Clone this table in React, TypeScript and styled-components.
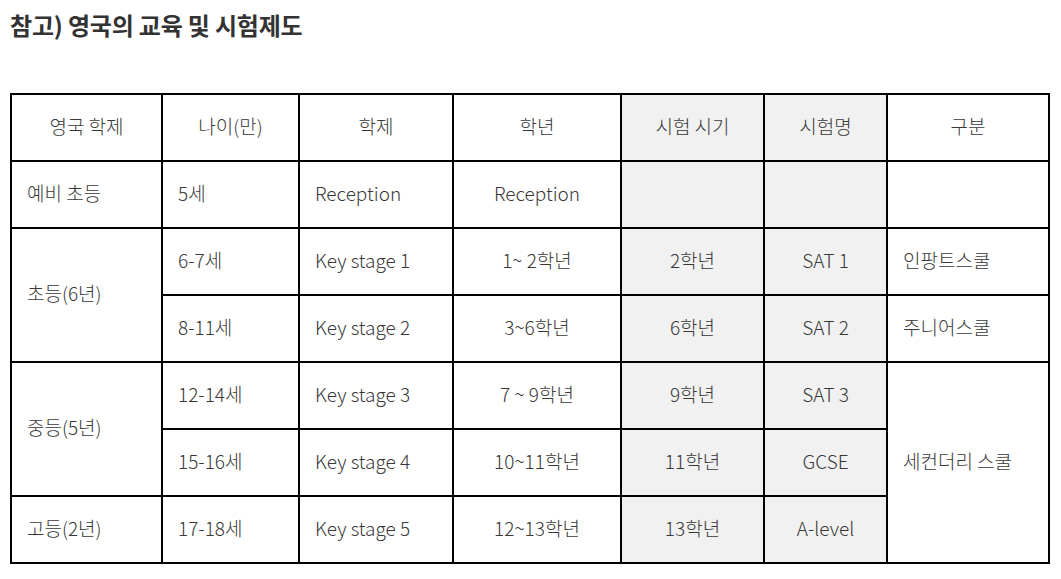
import { FC } from 'react';
import styled, { createGlobalStyle } from 'styled-components';

const GlobalStyle = createGlobalStyle`
    body {
        margin: 0;
        background: #fff;
        font-family: 'Noto Sans CJK KR', 'Noto Sans', sans-serif;
        color: #333;
    }
`;

const Page = styled.div`
    padding: 8px 10px;
`;

const Title = styled.h3`
    margin: 0 0 51px;
    font-size: 24px;
    font-weight: 700;
    line-height: 34px;
    color: #333;
    letter-spacing: -0.2px;
`;

const Table = styled.table`
    border-collapse: collapse;
    table-layout: fixed;
    width: 1038px;
    font-size: 19px;
    font-weight: 300;
`;

const Row = styled.tr`
    height: 67px;
`;

type CellProps = { $center?: boolean; $shade?: boolean };

const Cell = styled.td<CellProps>`
    border: 2px solid #000;
    padding: 0 15px 5px;
    text-align: ${(p) => (p.$center ? 'center' : 'left')};
    background: ${(p) => (p.$shade ? '#f1f1f1' : '#fff')};
    color: #383838;
    vertical-align: middle;
    white-space: nowrap;
`;

const widths = [151, 137, 154, 168, 143, 123, 162];
const headers = ['영국 학제', '나이(만)', '학제', '학년', '시험 시기', '시험명', '구분'];

type Line = {
    stage?: { label: string; span: number };
    age: string;
    term: string;
    grade: string;
    when: string;
    exam: string;
    school?: { label: string; span: number };
};

const lines: Line[] = [
    { stage: { label: '예비 초등', span: 1 }, age: '5세', term: 'Reception', grade: 'Reception', when: '', exam: '', school: { label: '', span: 1 } },
    { stage: { label: '초등(6년)', span: 2 }, age: '6-7세', term: 'Key stage 1', grade: '1~ 2학년', when: '2학년', exam: 'SAT 1', school: { label: '인팡트스쿨', span: 1 } },
    { age: '8-11세', term: 'Key stage 2', grade: '3~6학년', when: '6학년', exam: 'SAT 2', school: { label: '주니어스쿨', span: 1 } },
    { stage: { label: '중등(5년)', span: 2 }, age: '12-14세', term: 'Key stage 3', grade: '7 ~ 9학년', when: '9학년', exam: 'SAT 3', school: { label: '세컨더리 스쿨', span: 3 } },
    { age: '15-16세', term: 'Key stage 4', grade: '10~11학년', when: '11학년', exam: 'GCSE' },
    { stage: { label: '고등(2년)', span: 1 }, age: '17-18세', term: 'Key stage 5', grade: '12~13학년', when: '13학년', exam: 'A-level' },
];

const App: FC = () => (
    <Page>
        <GlobalStyle />
        <Title>참고) 영국의 교육 및 시험제도</Title>
        <Table>
            <colgroup>
                {widths.map((w, i) => (
                    <col key={i} style={{ width: w }} />
                ))}
            </colgroup>
            <tbody>
                <Row>
                    {headers.map((h, i) => (
                        <Cell key={h} $center $shade={i === 4 || i === 5}>
                            {h}
                        </Cell>
                    ))}
                </Row>
                {lines.map((l, i) => (
                    <Row key={i}>
                        {l.stage && <Cell rowSpan={l.stage.span}>{l.stage.label}</Cell>}
                        <Cell>{l.age}</Cell>
                        <Cell>{l.term}</Cell>
                        <Cell $center>{l.grade}</Cell>
                        <Cell $center $shade>
                            {l.when}
                        </Cell>
                        <Cell $center $shade>
                            {l.exam}
                        </Cell>
                        {l.school && <Cell rowSpan={l.school.span}>{l.school.label}</Cell>}
                    </Row>
                ))}
            </tbody>
        </Table>
    </Page>
);

export default App;
